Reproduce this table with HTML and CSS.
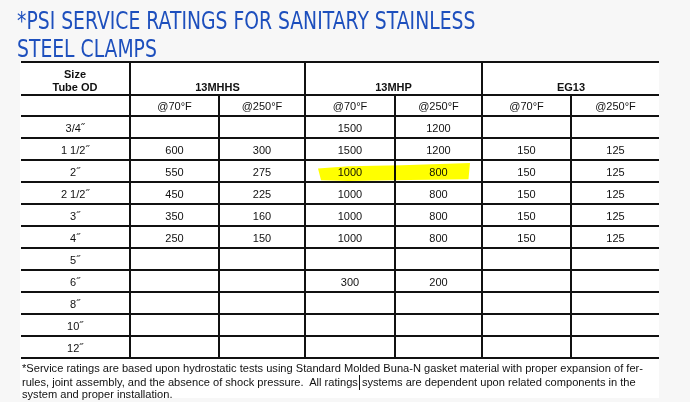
FILE: index.html
```html
<!DOCTYPE html>
<html>
<head>
<meta charset="utf-8">
<link rel="stylesheet" href="styles.css">
</head>
<body>
<header class="titlebar">
  <h1 class="title">*PSI SERVICE RATINGS FOR SANITARY STAINLESS<br>STEEL CLAMPS</h1>
</header>
<div class="sheet">
  <table class="ratings">
    <colgroup>
      <col class="c-size"><col class="c1"><col class="c2"><col class="c3"><col class="c4"><col class="c5"><col class="c6">
    </colgroup>
    <tr class="head1">
      <th class="sizehead">Size<br>Tube OD</th>
      <th colspan="2">13MHHS</th>
      <th colspan="2">13MHP</th>
      <th colspan="2">EG13</th>
    </tr>
    <tr class="head2">
      <td></td><td>@70°F</td><td>@250°F</td><td>@70°F</td><td>@250°F</td><td>@70°F</td><td>@250°F</td>
    </tr>
    <tr><td>3/4˝</td><td></td><td></td><td>1500</td><td>1200</td><td></td><td></td></tr>
    <tr><td>1 1/2˝</td><td>600</td><td>300</td><td>1500</td><td>1200</td><td>150</td><td>125</td></tr>
    <tr class="hl-row"><td>2˝</td><td>550</td><td>275</td><td class="hl-cell"><span class="marker"></span>1000</td><td>800</td><td>150</td><td>125</td></tr>
    <tr><td>2 1/2˝</td><td>450</td><td>225</td><td>1000</td><td>800</td><td>150</td><td>125</td></tr>
    <tr><td>3˝</td><td>350</td><td>160</td><td>1000</td><td>800</td><td>150</td><td>125</td></tr>
    <tr><td>4˝</td><td>250</td><td>150</td><td>1000</td><td>800</td><td>150</td><td>125</td></tr>
    <tr><td>5˝</td><td></td><td></td><td></td><td></td><td></td><td></td></tr>
    <tr><td>6˝</td><td></td><td></td><td>300</td><td>200</td><td></td><td></td></tr>
    <tr><td>8˝</td><td></td><td></td><td></td><td></td><td></td><td></td></tr>
    <tr><td>10˝</td><td></td><td></td><td></td><td></td><td></td><td></td></tr>
    <tr><td>12˝</td><td></td><td></td><td></td><td></td><td></td><td></td></tr>
  </table>
  <p class="note"><span class="line">*Service ratings are based upon hydrostatic tests using Standard Molded Buna-N gasket material with proper expansion of fer-</span><span class="line">rules, joint assembly, and the absence of shock pressure.&nbsp; All ratings<span class="caret"></span>systems are dependent upon related components in the</span><span class="line">system and proper installation.</span></p>
</div>
</body>
</html>
```

FILE: styles.css
```css
html, body {
  margin: 0;
  padding: 0;
}
body {
  background: #f7f7f7;
  width: 690px;
  height: 402px;
  overflow: hidden;
}
.titlebar {
  height: 54px;
  padding: 7px 0 0 17px;
}
.title {
  margin: 0;
  font-family: "DejaVu Sans", sans-serif;
  font-weight: normal;
  font-size: 25px;
  line-height: 28px;
  color: #1d4fbd;
  white-space: nowrap;
  transform: scaleX(0.751);
  transform-origin: left top;
}
.sheet {
  background: #fff;
  margin-left: 20px;
  width: 639px;
  height: 337px;
}
.ratings {
  border-collapse: collapse;
  table-layout: fixed;
  width: 638px;
  margin-left: 1px;
  font-family: "Liberation Sans", Arial, sans-serif;
  font-size: 11px;
  color: #111;
}
.c-size { width: 109px; }
.c1 { width: 89px; }
.c2 { width: 86px; }
.c3 { width: 90px; }
.c4 { width: 87px; }
.c5 { width: 89px; }
.c6 { width: 88px; }
.ratings td, .ratings th {
  border: 2px solid #111;
  padding: 2px 0 0;
  text-align: center;
  height: 18px;
  line-height: 13px;
}
.ratings tr td:first-child, .ratings tr th:first-child {
  border-left: none;
}
.ratings tr td:last-child, .ratings tr th:last-child {
  border-right: none;
}
.head1 th {
  height: 31px;
  padding: 0;
  vertical-align: bottom;
  font-weight: bold;
}
.head2 td {
  height: 17px;
}
.hl-cell {
  position: relative;
}
.marker {
  position: absolute;
  left: 12px;
  top: 2px;
  width: 152px;
  height: 18px;
  background: #ffff00;
  mix-blend-mode: multiply;
  clip-path: polygon(0 30%, 20% 18%, 55% 12%, 100% 0, 99% 90%, 60% 95%, 20% 100%, 2% 96%);
}
.note {
  margin: 3px 0 0 2px;
  font-family: "Liberation Sans", Arial, sans-serif;
  font-size: 11.1px;
  line-height: 13px;
  color: #111;
}
.note .line {
  display: block;
  height: 13px;
  white-space: nowrap;
}
.caret {
  display: inline-block;
  width: 1px;
  height: 15px;
  background: #111;
  vertical-align: -4px;
  margin: 0 2px 0 1px;
}
```
